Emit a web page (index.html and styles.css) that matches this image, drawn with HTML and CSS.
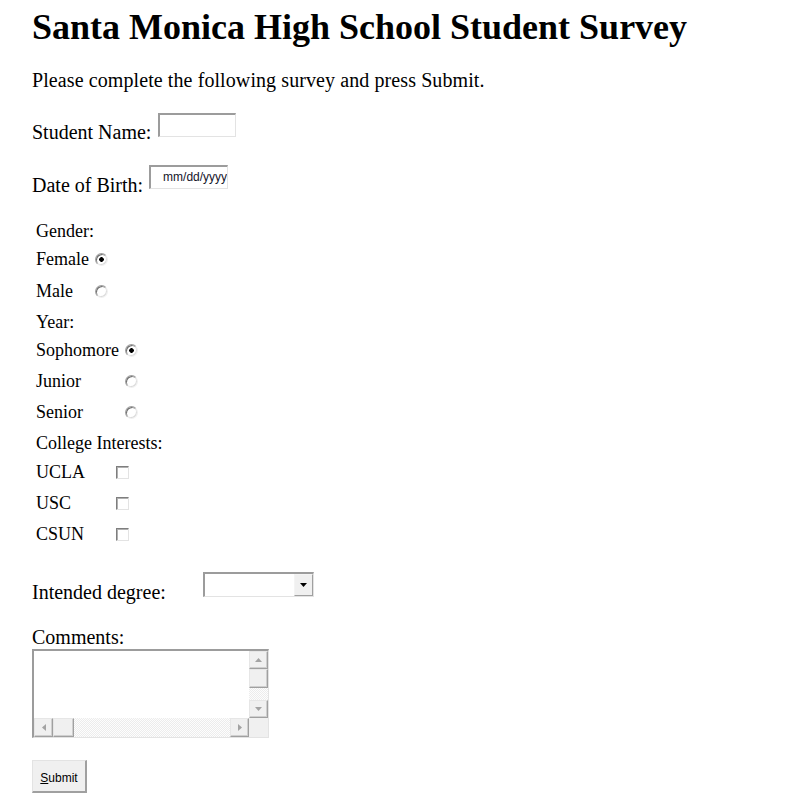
FILE: index.html
```html
<!DOCTYPE html>
<html>
<head>
<meta charset="utf-8">
<title>Santa Monica High School Student Survey</title>
<link rel="stylesheet" href="styles.css">
</head>
<body>
<div class="page">
  <h1 class="title">Santa Monica High School Student Survey</h1>
  <p class="intro">Please complete the following survey and press Submit.</p>
  <form class="survey">
    <div class="field-row">
      <label class="field-label" for="name">Student Name:</label>
      <input class="text-field name-field" id="name" type="text">
    </div>
    <div class="field-row dob-row">
      <label class="field-label" for="dob">Date of Birth:</label>
      <input class="text-field dob-field" id="dob" type="text" value="mm/dd/yyyy">
    </div>

    <div class="choices">
      <div class="choice-head h27">Gender:</div>
      <div class="choice h31"><span class="choice-label w-gender">Female</span><input class="radio" type="radio" name="gender" checked></div>
      <div class="choice h32"><span class="choice-label w-gender">Male</span><input class="radio" type="radio" name="gender"></div>
      <div class="choice-head h28">Year:</div>
      <div class="choice h31"><span class="choice-label w-year">Sophomore</span><input class="radio" type="radio" name="year" checked></div>
      <div class="choice h31"><span class="choice-label w-year">Junior</span><input class="radio" type="radio" name="year"></div>
      <div class="choice h31"><span class="choice-label w-year">Senior</span><input class="radio" type="radio" name="year"></div>
      <div class="choice-head h28">College Interests:</div>
      <div class="choice h32"><span class="choice-label w-college">UCLA</span><input class="check" type="checkbox"></div>
      <div class="choice h31"><span class="choice-label w-college">USC</span><input class="check" type="checkbox"></div>
      <div class="choice h31"><span class="choice-label w-college">CSUN</span><input class="check" type="checkbox"></div>
    </div>

    <div class="field-row degree-row">
      <label class="field-label degree-label">Intended degree:</label>
      <div class="select-box">
        <span class="select-value"></span>
        <span class="select-button">
          <svg width="7" height="4" viewBox="0 0 7 4"><path d="M0 0H7L3.5 4Z" fill="#000"/></svg>
        </span>
      </div>
    </div>

    <div class="comments-label">Comments:</div>
    <div class="textarea-box">
      <textarea class="textarea"></textarea>
      <div class="vscroll">
        <span class="sb-btn sb-v">
          <svg width="7" height="4" viewBox="0 0 7 4"><path d="M3.5 0L7 4H0Z" fill="#a3a3a3"/></svg>
        </span>
        <span class="sb-btn sb-vthumb"></span>
        <span class="sb-track"></span>
        <span class="sb-btn sb-v">
          <svg width="7" height="4" viewBox="0 0 7 4"><path d="M0 0H7L3.5 4Z" fill="#a3a3a3"/></svg>
        </span>
      </div>
      <div class="hscroll">
        <span class="sb-btn sb-h">
          <svg width="4" height="7" viewBox="0 0 4 7"><path d="M0 3.5L4 0V7Z" fill="#a3a3a3"/></svg>
        </span>
        <span class="sb-btn sb-hthumb"></span>
        <span class="sb-track"></span>
        <span class="sb-btn sb-h">
          <svg width="4" height="7" viewBox="0 0 4 7"><path d="M4 3.5L0 0V7Z" fill="#a3a3a3"/></svg>
        </span>
      </div>
      <div class="sb-corner"></div>
    </div>

    <button class="submit" type="button"><u>S</u>ubmit</button>
  </form>
</div>
</body>
</html>
```
FILE: styles.css
```css
html, body {
  margin: 0;
  padding: 0;
  background: #fff;
}
body {
  font-family: "Liberation Serif", "Times New Roman", serif;
  color: #000;
}
.page {
  padding-left: 32px;
}
.title {
  margin: 0;
  padding-top: 7px;
  font-size: 36px;
  line-height: 40px;
  font-weight: bold;
}
.intro {
  margin: 21px 0 0;
  font-size: 20px;
  line-height: 24px;
  letter-spacing: 0.09px;
}
.survey {
  margin: 0;
}
.field-row {
  display: flex;
  align-items: flex-start;
  margin-top: 21px;
  height: 31px;
}
.dob-row {
  margin-top: 21px;
  height: 32px;
}
.field-label {
  font-size: 20px;
  line-height: 24px;
  margin-top: 7px;
  margin-right: 7px;
  white-space: nowrap;
}
.dob-row .field-label {
  margin-top: 8px;
  margin-right: 6px;
}
.text-field {
  -webkit-appearance: none;
  appearance: none;
  box-sizing: border-box;
  height: 24px;
  margin: 0;
  border-style: solid;
  border-width: 2px 1px 1px 2px;
  border-color: #9c9c9c #e3e3e3 #e3e3e3 #9c9c9c;
  background: #fff;
  outline: none;
  font-family: "Liberation Sans", Arial, sans-serif;
  font-size: 12px;
  color: #14142a;
}
.name-field {
  width: 78px;
}
.dob-field {
  width: 79px;
  padding: 0 0 2px 12px;
}

.choices {
  margin-top: 20px;
  padding-left: 4px;
  font-size: 18px;
}
.choice-head, .choice {
  display: flex;
  align-items: center;
}
.choice-head {
  padding-top: 2px;
  box-sizing: border-box;
}
.h27 { height: 27px; }
.h28 { height: 28px; }
.h29 { height: 29px; }
.h30 { height: 30px; }
.h31 { height: 31px; }
.h32 { height: 32px; }
.choice-label {
  flex: none;
}
.w-gender { width: 59px; }
.w-year { width: 89px; }
.w-college { width: 80px; }

.radio {
  -webkit-appearance: none;
  appearance: none;
  box-sizing: border-box;
  width: 13px;
  height: 13px;
  margin: 0;
  border-radius: 50%;
  border: 1px solid;
  border-color: #a0a0a0 #f0f0f0 #f0f0f0 #a0a0a0;
  box-shadow: inset 1px 1px 0 #707070, inset -1px -1px 0 #dcdcdc;
  background: #fff;
}
.radio:checked {
  background: radial-gradient(circle at 50% 50%, #000 0 2px, #fff 2.6px);
}
.check {
  -webkit-appearance: none;
  appearance: none;
  box-sizing: border-box;
  width: 13px;
  height: 13px;
  margin: 0;
  border: 1px solid;
  border-color: #7e7e7e #e3e3e3 #e3e3e3 #7e7e7e;
  box-shadow: inset 1px 1px 0 #b0b0b0;
  background: #fff;
}

.degree-row {
  margin-top: 22px;
  height: 32px;
}
.degree-label {
  margin-top: 8px;
  margin-right: 0;
  width: 171px;
}
.select-box {
  box-sizing: border-box;
  width: 111px;
  height: 25px;
  display: flex;
  border-style: solid;
  border-width: 2px 1px 1px 2px;
  border-color: #9c9c9c #e3e3e3 #e3e3e3 #9c9c9c;
  background: #fff;
}
.select-value {
  flex: 1;
}
.select-button {
  box-sizing: border-box;
  width: 19px;
  height: 22px;
  display: flex;
  align-items: center;
  justify-content: center;
  background: #f0f0f0;
  border-style: solid;
  border-width: 1px;
  border-color: #f4f4f4 #a0a0a0 #a0a0a0 #f4f4f4;
}

.comments-label {
  margin-top: 21px;
  font-size: 20px;
  line-height: 24px;
}
.textarea-box {
  box-sizing: border-box;
  width: 237px;
  height: 89px;
  display: grid;
  grid-template-columns: 1fr 19px;
  grid-template-rows: 1fr 19px;
  border-style: solid;
  border-width: 2px 1px 1px 2px;
  border-color: #9c9c9c #e3e3e3 #e3e3e3 #9c9c9c;
  background: #fff;
}
.textarea {
  box-sizing: border-box;
  width: 100%;
  height: 100%;
  margin: 0;
  padding: 0;
  border: 0;
  resize: none;
  outline: none;
  overflow: hidden;
  background: #fff;
}
.vscroll {
  display: flex;
  flex-direction: column;
}
.hscroll {
  display: flex;
}
.sb-btn {
  box-sizing: border-box;
  display: flex;
  align-items: center;
  justify-content: center;
  background: #f0f0f0;
  border-style: solid;
  border-width: 1px;
  border-color: #e6e6e6 #a0a0a0 #a0a0a0 #e6e6e6;
  box-shadow: inset -1px -1px 0 #cfcfcf;
  flex: none;
}
.sb-v { height: 18px; }
.sb-vthumb { height: 19px; }
.sb-h { width: 19px; }
.sb-hthumb { width: 21px; }
.sb-track {
  flex: 1;
  background-color: #fafafa;
  background-image: repeating-conic-gradient(#ececec 0 25%, #fdfdfd 0 50%);
  background-size: 2px 2px;
}
.sb-corner {
  background: #f0f0f0;
}

.submit {
  display: block;
  box-sizing: border-box;
  margin: 22px 0 0;
  width: 55px;
  height: 33px;
  padding: 3px 0 0;
  background: #f0f0f0;
  border-style: solid;
  border-width: 1px 2px 2px 1px;
  border-color: #e3e3e3 #a0a0a0 #a0a0a0 #e3e3e3;
  font-family: "Liberation Sans", Arial, sans-serif;
  font-size: 12px;
  color: #000;
}
```
